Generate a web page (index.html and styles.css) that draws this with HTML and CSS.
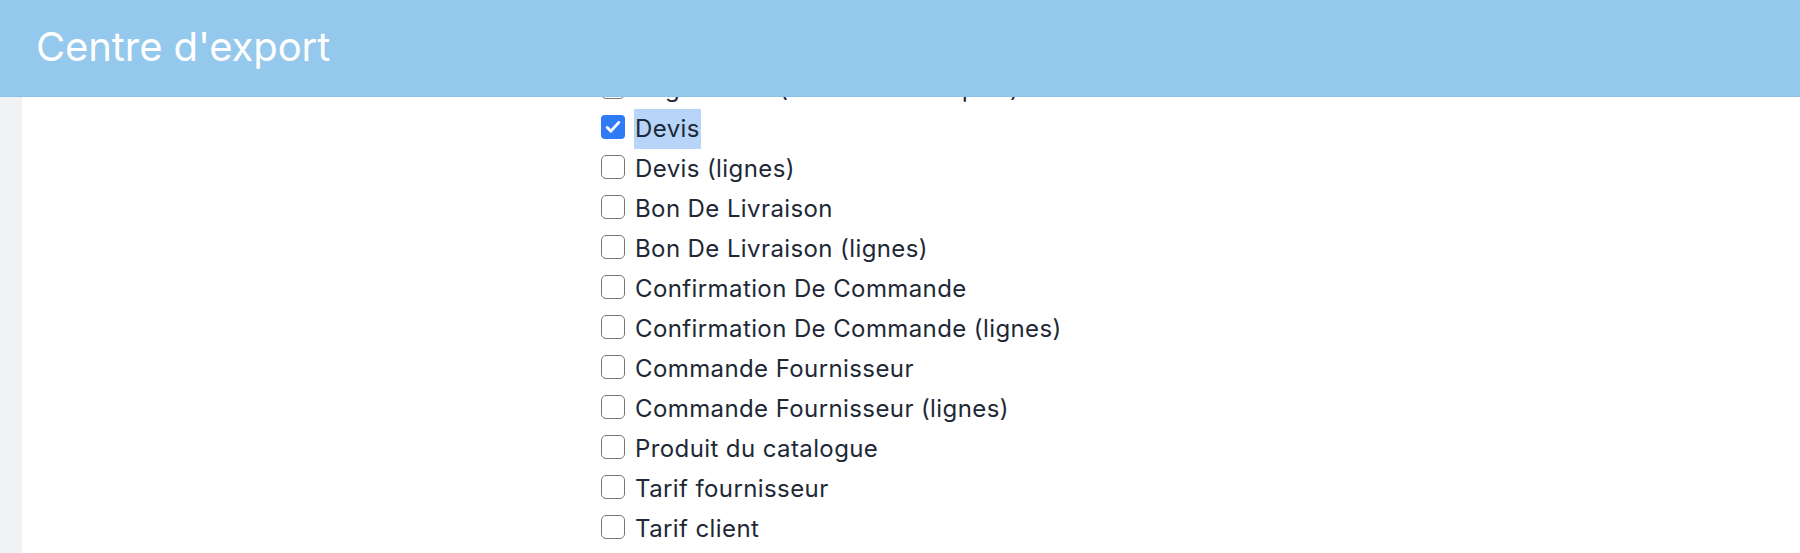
FILE: index.html
```html
<!DOCTYPE html>
<html lang="fr">
<head>
  <meta charset="UTF-8">
  <title>Centre d'export</title>
  <link rel="stylesheet" href="styles.css">
</head>
<body>
  <header class="entete">
    <h1>Centre d'export</h1>
  </header>

  <div class="page">
    <aside class="barre-laterale"></aside>

    <main class="contenu">
      <ul class="liste-export">
        <li class="ligne">
          <span class="case"></span>
          <span class="libelle">Règlements (détail des banques)</span>
        </li>
        <li class="ligne">
          <span class="case coche">
            <svg viewBox="0 0 24 24" width="20" height="20"><path d="M5 12.5l4.5 4.5L19 6.5" fill="none" stroke="#fff" stroke-width="3.4" stroke-linecap="round" stroke-linejoin="round"/></svg>
          </span>
          <span class="libelle selection">Devis</span>
        </li>
        <li class="ligne"><span class="case"></span><span class="libelle">Devis (lignes)</span></li>
        <li class="ligne"><span class="case"></span><span class="libelle">Bon De Livraison</span></li>
        <li class="ligne"><span class="case"></span><span class="libelle">Bon De Livraison (lignes)</span></li>
        <li class="ligne"><span class="case"></span><span class="libelle">Confirmation De Commande</span></li>
        <li class="ligne"><span class="case"></span><span class="libelle">Confirmation De Commande (lignes)</span></li>
        <li class="ligne"><span class="case"></span><span class="libelle">Commande Fournisseur</span></li>
        <li class="ligne"><span class="case"></span><span class="libelle">Commande Fournisseur (lignes)</span></li>
        <li class="ligne"><span class="case"></span><span class="libelle">Produit du catalogue</span></li>
        <li class="ligne"><span class="case"></span><span class="libelle">Tarif fournisseur</span></li>
        <li class="ligne"><span class="case"></span><span class="libelle">Tarif client</span></li>
      </ul>
    </main>
  </div>
</body>
</html>
```

FILE: styles.css
```css
html, body {
  margin: 0;
  height: 100%;
}

body {
  display: flex;
  flex-direction: column;
  overflow: hidden;
  font-family: Inter, "Noto Sans", sans-serif;
  background-color: #ffffff;
}

.entete {
  flex: 0 0 97px;
  display: flex;
  align-items: center;
  padding-left: 36px;
  padding-bottom: 4px;
  box-sizing: border-box;
  background-color: #94c8ec;
  border-bottom: 1px solid #8cc2ea;
}

.entete h1 {
  margin: 0;
  color: #ffffff;
  font-size: 40px;
  font-weight: 400;
  letter-spacing: -0.1px;
}

.page {
  flex: 1;
  display: flex;
  overflow: hidden;
}

.barre-laterale {
  flex: 0 0 22px;
  background-color: #f1f2f6;
}

.contenu {
  flex: 1;
  overflow: hidden;
}

.liste-export {
  list-style: none;
  margin: -28px 0 0 0;
  padding: 0 0 0 579px;
}

.ligne {
  display: flex;
  align-items: center;
  height: 40px;
}

.case {
  box-sizing: border-box;
  flex: 0 0 24px;
  height: 24px;
  margin-bottom: 4px;
  border: 1.5px solid #777777;
  border-radius: 5px;
  background-color: #ffffff;
  display: flex;
  align-items: center;
  justify-content: center;
}

.case.coche {
  border: none;
  border-radius: 4px;
  background-color: #2f7bf5;
}

.libelle {
  margin-left: 9px;
  padding: 0 1px;
  line-height: 40px;
  font-size: 24px;
  letter-spacing: 0.4px;
  color: #1e2836;
}

.libelle.selection {
  background-color: #b6d5f8;
}
```
